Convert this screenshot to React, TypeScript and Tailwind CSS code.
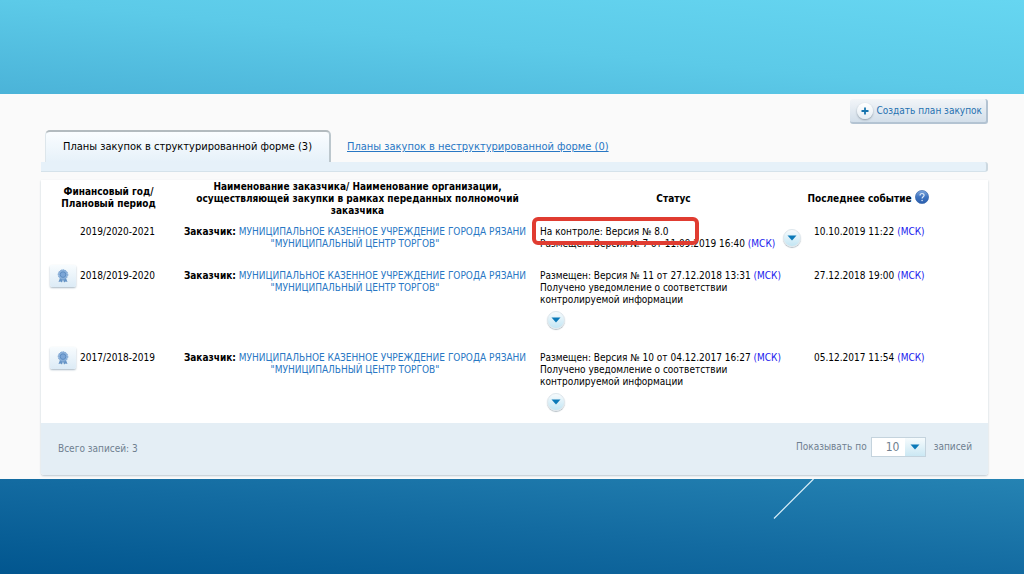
import { ReactNode } from "react";

type Plan = {
  period: string;
  signed: boolean;
  version: string;
  notes: string[];
  event: string;
};

const plans: Plan[] = [
  {
    period: "2019/2020-2021",
    signed: false,
    version: "Размещен: Версия № 7 от 11.09.2019 16:40",
    notes: [],
    event: "10.10.2019 11:22",
  },
  {
    period: "2018/2019-2020",
    signed: true,
    version: "Размещен: Версия № 11 от 27.12.2018 13:31",
    notes: ["Получено уведомление о соответствии", "контролируемой информации"],
    event: "27.12.2018 19:00",
  },
  {
    period: "2017/2018-2019",
    signed: true,
    version: "Размещен: Версия № 10 от 04.12.2017 16:27",
    notes: ["Получено уведомление о соответствии", "контролируемой информации"],
    event: "05.12.2017 11:54",
  },
];

const Msk = () => <span className="text-[#1a1aee]">(МСК)</span>;

const Triangle = () => (
  <svg width="10" height="6" viewBox="0 0 10 6" aria-hidden="true">
    <path d="M0.5 0.5h9L5 5.5z" fill="#0b79b8" />
  </svg>
);

const ExpandButton = () => (
  <button
    type="button"
    aria-label="Развернуть"
    className="flex size-[18px] shrink-0 items-center justify-center rounded-full border border-[#dfe7ec] bg-linear-to-b from-[#f7fbfd] to-[#c3e6f4] shadow-[0_1px_1px_#b4bfc6]"
  >
    <Triangle />
  </button>
);

const SignedButton = () => (
  <button
    type="button"
    aria-label="Электронная подпись"
    className="flex h-[22px] w-[26px] items-center justify-center rounded-xs bg-linear-to-b from-[#f8fcfe] to-[#dcebf6] shadow-[0_1px_2px_#a9b8c4]"
  >
    <svg width="12" height="14" viewBox="0 0 12 14" aria-hidden="true">
      <path d="M3.2 8.5L1.5 13l2-.4L5 13.6 6 10.5l1 3.1 1.500-1 2 .4-1.700-4.500z" fill="#6594c6" />
      <circle cx="6" cy="5.6" r="4.8" fill="#8db2db" stroke="#7ea6d3" strokeWidth="1" strokeDasharray="1.6 0.8" />
      <circle cx="6" cy="5.6" r="2.8" fill="#7ba5d6" stroke="#5686bd" strokeWidth="0.8" />
    </svg>
  </button>
);

const HelpIcon = () => (
  <button type="button" aria-label="Справка" className="mb-1 block size-[14px]">
    <svg width="14" height="14" viewBox="0 0 14 14" aria-hidden="true">
      <defs>
        <linearGradient id="help" x1="0" y1="0" x2="0" y2="1">
          <stop offset="0" stopColor="#7fa8de" />
          <stop offset="0.5" stopColor="#3f74c0" />
          <stop offset="1" stopColor="#2b5fae" />
        </linearGradient>
      </defs>
      <circle cx="7" cy="7" r="6.6" fill="url(#help)" stroke="#2f5fa6" strokeWidth="0.6" />
      <path d="M5 5.5c0-2.7 4.1-2.6 4.1-.2C9.1 6.8 7.1 6.7 7.1 8.5" fill="none" stroke="#dce9f8" strokeWidth="1.2" />
      <circle cx="7.1" cy="10.5" r="0.8" fill="#dce9f8" />
    </svg>
  </button>
);

const Cell = ({ children, className = "" }: { children: ReactNode; className?: string }) => (
  <td className={`pt-[7px] align-top ${className}`}>{children}</td>
);

const PlansTable = () => (
  <table className="w-full table-fixed border-collapse text-[10px] leading-3">
    <colgroup>
      <col className="w-[135px]" />
      <col className="w-[364px]" />
      <col className="w-[267px]" />
      <col className="w-[122px]" />
      <col />
    </colgroup>
    <thead>
      <tr className="h-[39px]">
        <th scope="col" className="pb-1">
          Финансовый год/
          <br />
          Плановый период
        </th>
        <th scope="col" className="pr-[9px] pb-0.5 pl-2">
          Наименование заказчика/ Наименование организации,
          <br />
          осуществляющей закупки в рамках переданных полномочий
          <br />
          заказчика
        </th>
        <th scope="col" className="pb-0.5">
          Статус
        </th>
        <th scope="col" className="pb-0.5">
          <div className="flex items-center justify-center gap-[3px] whitespace-nowrap">
            Последнее событие
            <HelpIcon />
          </div>
        </th>
        <td />
      </tr>
    </thead>
    <tbody>
      {plans.map((plan) => (
        <tr key={plan.period} className={plan.signed ? "h-[82px]" : "h-[44px]"}>
          <Cell>
            <div className="flex h-3 items-center gap-1 pl-[9px]">
              <div className="w-[26px]">{plan.signed && <SignedButton />}</div>
              {plan.period}
            </div>
          </Cell>
          <Cell className="pr-[13px] pl-[7px] text-center">
            <b>Заказчик:</b>{" "}
            <a href="#customer" className="text-[#2877c4]">
              МУНИЦИПАЛЬНОЕ КАЗЕННОЕ УЧРЕЖДЕНИЕ ГОРОДА РЯЗАНИ
              <br />
              "МУНИЦИПАЛЬНЫЙ ЦЕНТР ТОРГОВ"
            </a>
          </Cell>
          <Cell className="whitespace-nowrap">
            {plan.signed ? (
              <>
                {plan.version} <Msk />
                {plan.notes.map((note) => (
                  <div key={note}>{note}</div>
                ))}
                <div className="mt-[5px] ml-[7px]">
                  <ExpandButton />
                </div>
              </>
            ) : (
              <div className="relative flex items-center gap-2">
                <div>
                  На контроле: Версия № 8.0
                  <br />
                  {plan.version} <Msk />
                </div>
                <ExpandButton />
                <div className="pointer-events-none absolute -top-[9px] -left-2 h-7 w-[167px] rounded-md border-4 border-[#e03c31]" />
              </div>
            )}
          </Cell>
          <Cell className="pl-[7px] whitespace-nowrap">
            {plan.event} <Msk />
          </Cell>
          <td />
        </tr>
      ))}
    </tbody>
  </table>
);

const App = () => {
  return (
    <div className="flex min-h-screen flex-col font-['DejaVu_Sans_Condensed','DejaVu_Sans',sans-serif] text-[10px] leading-3 text-black">
      <header className="h-[94px] bg-linear-to-tr from-[#4bb3d8] via-[#5ccae8] via-50% to-[#66d6f1]" />

      <main className="bg-[#fafafa] pt-[5px] pr-9 pb-1 pl-[41px]">
        <div className="flex justify-end">
          <button
            type="button"
            className="flex h-[25px] items-center gap-1 rounded-[3px] border-r-2 border-b-2 border-[#b3c3d2] bg-linear-to-b from-[#f2f5f8] to-[#d3dfea] pr-1 pl-[7px] text-[#2571b0]"
          >
            <span className="flex size-4 items-center justify-center rounded-full bg-linear-to-b from-white to-[#e6eef4] shadow-[0_1px_2px_#8e9ba6]">
              <svg width="8" height="8" viewBox="0 0 8 8" aria-hidden="true">
                <path d="M4 0.5v7M0.5 4h7" stroke="#1674ae" strokeWidth="1.8" />
              </svg>
            </span>
            Создать план закупок
          </button>
        </div>

        <nav className="mt-1.5 flex items-stretch pl-1 text-[11px] leading-4">
          <a
            href="#structured"
            aria-current="page"
            className="flex h-8 w-[286px] items-center justify-center rounded-t-[5px] border-t-2 border-r-2 border-l border-t-[#b3bbbf] border-r-[#bcc7cd] border-l-[#dde6eb] bg-linear-to-b from-[#fafdff] to-[#e6f1f9]"
          >
            Планы закупок в структурированной форме (3)
          </a>
          <a href="#unstructured" className="flex items-center pt-0.5 pl-4 text-[#2877c4] underline">
            Планы закупок в неструктурированной форме (0)
          </a>
        </nav>
        <div className="h-[10px] rounded-r-[3px] border-r-2 border-b border-r-[#ccd8e0] border-b-[#d5e2ea] bg-[#e6f1f9]" />

        <section className="mt-2 rounded-b-[3px] bg-white shadow-[0_1px_2px_#bcc8d0]">
          <PlansTable />
          <footer className="-mt-1 flex h-[52px] items-center justify-between rounded-b-[3px] bg-[#e4eef5] pr-4 pl-[17px] text-[#6f7f90]">
            <span>Всего записей: 3</span>
            <div className="mb-1 flex items-center gap-1">
              <label htmlFor="page-size">Показывать по</label>
              <div className="relative">
                <select
                  id="page-size"
                  defaultValue="10"
                  className="h-5 w-[55px] appearance-none border border-[#c4d3dd] bg-white pl-[14px] text-[12px] leading-4"
                >
                  <option>10</option>
                  <option>20</option>
                  <option>50</option>
                </select>
                <span className="pointer-events-none absolute inset-y-px right-px flex w-5 items-center justify-center bg-linear-to-b from-[#f6fbfd] to-[#cbe8f4]">
                  <Triangle />
                </span>
              </div>
              <span className="pl-1">записей</span>
            </div>
          </footer>
        </section>
      </main>

      <div className="flex min-h-[95px] flex-1 justify-end bg-linear-to-tr from-[#02568f] via-[#136ba1] via-50% to-[#2583b3] pr-[210px]">
        <svg width="41" height="41" viewBox="0 0 41 41" aria-hidden="true">
          <path d="M40.5 0L1 39.5" stroke="#d8eef8" strokeWidth="1.2" />
        </svg>
      </div>
    </div>
  );
};

export default App;
